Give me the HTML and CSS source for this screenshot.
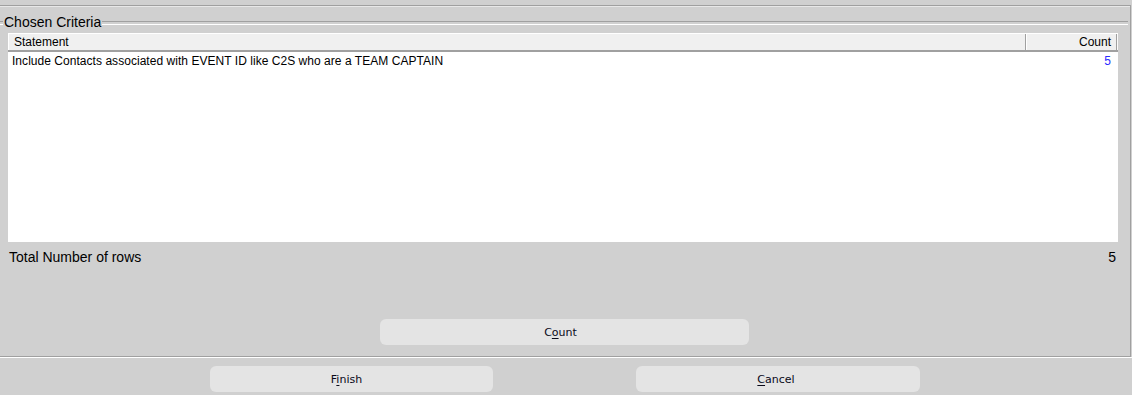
FILE: index.html
```html
<!doctype html>
<html>
<head>
<meta charset="utf-8">
<title>Chosen Criteria</title>
<link rel="stylesheet" href="styles.css">
</head>
<body>
<div class="panel">
    <div class="legend"><span>Chosen Criteria</span></div>
    <div class="grid">
        <div class="grid-head">
            <div class="col-statement">Statement</div>
            <div class="col-count">Count</div>
            <div class="col-rest"></div>
        </div>
        <div class="grid-body">
            <div class="row">
                <div class="cell-statement">Include Contacts associated with EVENT ID like C2S who are a TEAM CAPTAIN</div>
                <div class="cell-count">5</div>
            </div>
        </div>
    </div>
    <div class="total">
        <span>Total Number of rows</span>
        <span>5</span>
    </div>
    <div class="count-bar">
        <button class="btn btn-count">C<u>o</u>unt</button>
    </div>
</div>
<div class="footer">
    <button class="btn btn-finish">F<u>i</u>nish</button>
    <button class="btn btn-cancel"><u>C</u>ancel</button>
</div>
</body>
</html>
```
FILE: styles.css
```css
*{margin:0;padding:0;box-sizing:border-box}
html,body{background:#d0d0d0;}
body{width:1132px;height:395px;overflow:hidden;font-family:"Liberation Sans",Arial,sans-serif;color:#000;}

.panel{width:1131px;height:352px;margin-top:5px;border-top:1px solid #a0a0a0;border-right:1px solid #a0a0a0;border-bottom:1px solid #a0a0a0;box-shadow:inset 0 1px 0 #e8e8e8;display:flex;flex-direction:column;}

.legend{display:flex;align-items:center;height:16px;margin-top:8px;font-size:14px;}
.legend:before{content:"";width:3px;height:2px;border-top:1px solid #a0a0a0;border-bottom:1px solid #fff;margin-top:1px;}
.legend span{padding:0 1px;line-height:16px;}
.legend:after{content:"";flex:1;height:2px;border-top:1px solid #a0a0a0;border-bottom:1px solid #fff;margin:1px 2px 0 0;}

.grid{width:1110px;margin:3px 0 0 8px;font-size:12px;}
.grid-head{display:flex;height:19px;background:#f0f0f0;border-top:1px solid #fff;border-bottom:2px solid #a0a0a0;line-height:16px;}
.grid-head .col-statement{width:1018px;padding-left:5px;border-left:1px solid #fff;border-right:1px solid #a0a0a0;}
.grid-head .col-count{width:91px;padding-right:5px;text-align:right;border-left:1px solid #fff;border-right:1px solid #a0a0a0;}
.grid-head .col-rest{flex:1;background:#fafafa;}
.grid-body{height:190px;background:#fff;}
.grid-body .row{display:flex;height:18px;line-height:18px;}
.grid-body .cell-statement{flex:1;padding-left:4px;letter-spacing:0.04px;}
.grid-body .cell-count{width:60px;padding-right:7px;text-align:right;color:#2a2aff;}

.total{display:flex;justify-content:space-between;height:16px;line-height:16px;margin:7px 0 0 9px;width:1107px;font-size:14px;}

.count-bar{margin-top:auto;margin-bottom:11px;padding-left:380px;}

.btn{height:26px;background:#e4e4e4;border:none;border-radius:6px;font-family:"DejaVu Sans",Tahoma,sans-serif;font-size:11px;color:#0a0a1a;cursor:pointer;}
.btn u{text-decoration:underline;text-underline-offset:2px;}
.btn-count{width:369px;padding-right:8px;}

.footer{border-top:1px solid #fff;display:flex;gap:143px;padding:8px 0 0 210px;}
.btn-finish{width:283px;padding-right:10px;}
.btn-cancel{width:284px;padding-right:4px;}
```
